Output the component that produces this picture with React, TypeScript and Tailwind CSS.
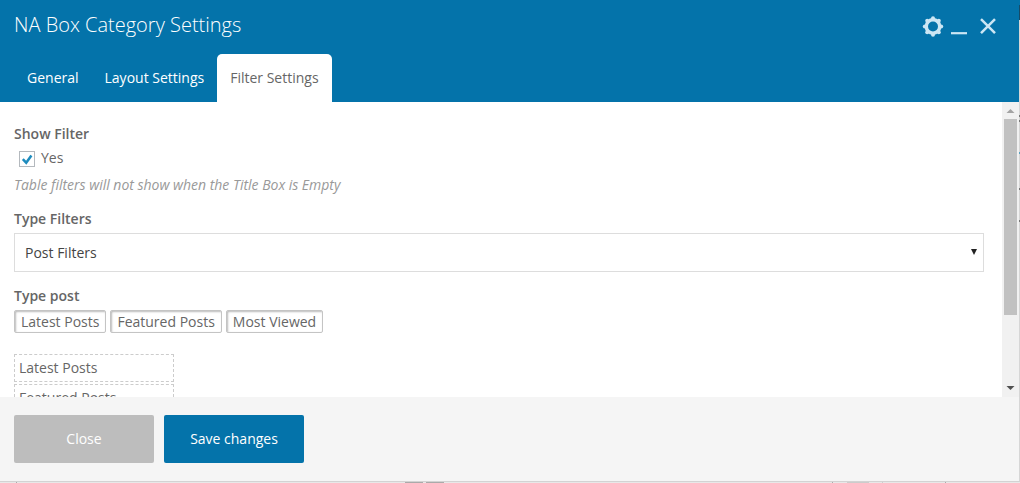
const tags = ["Latest Posts", "Featured Posts", "Most Viewed"];
const sortable = tags.slice(0, 2);

function Header() {
  return (
    <header className="flex h-[102px] shrink-0 flex-col justify-between bg-[#0473aa] text-white">
      <div className="flex items-start justify-between pr-[22px] pl-[14px]">
        <h1 className="pt-[10px] text-[20px] leading-[30px] font-light">NA Box Category Settings</h1>
        <div className="flex pt-4 text-[#cce6f4]">
          <svg width="22" height="22" viewBox="0 0 22 22" fill="none" stroke="currentColor">
            <circle cx="11" cy="10.5" r="6.7" strokeWidth="3.4" />
            <g fill="currentColor" stroke="none">
              <circle cx="11" cy="2.3" r="2" />
              <circle cx="16.8" cy="4.7" r="2" />
              <circle cx="19.2" cy="10.5" r="2" />
              <circle cx="16.8" cy="16.3" r="2" />
              <circle cx="11" cy="18.7" r="2" />
              <circle cx="5.2" cy="16.3" r="2" />
              <circle cx="2.8" cy="10.5" r="2" />
              <circle cx="5.2" cy="4.7" r="2" />
            </g>
          </svg>
          <svg className="ml-[7px]" width="16" height="22" viewBox="0 0 16 22" stroke="currentColor">
            <path d="M0 17.2h16" strokeWidth="2.2" />
          </svg>
          <svg className="ml-[12px]" width="18" height="22" viewBox="0 0 18 22" stroke="currentColor">
            <path d="M2 3.2l14 14M16 3.2l-14 14" strokeWidth="2.5" />
          </svg>
        </div>
      </div>
      <nav className="flex h-12 pl-[14px] leading-[48px]">
        <button className="px-[13px]">General</button>
        <button className="px-[13px]">Layout Settings</button>
        <button className="rounded-t-[5px] bg-white px-[13px] text-[#666]">Filter Settings</button>
      </nav>
    </header>
  );
}

function Scrollbar() {
  return (
    <div className="flex w-[17px] shrink-0 flex-col items-center bg-[#f1f1f1]">
      <svg className="shrink-0" width="17" height="17" viewBox="0 0 17 17">
        <path d="M4.5 11l4-4 4 4z" fill="#a3a3a3" />
      </svg>
      <div className="h-[196px] w-[13px] bg-[#c1c1c1]" />
      <svg className="mt-auto" width="17" height="17" viewBox="0 0 17 17">
        <path d="M4.5 6l4 4 4-4z" fill="#505050" />
      </svg>
    </div>
  );
}

export default function App() {
  return (
    <div className="flex h-[483px] w-[1020px] flex-col overflow-hidden bg-[#e8e8e8] font-['Open_Sans',sans-serif] text-[14px] text-[#666]">
      <div className="flex h-[481px] shrink-0">
        <div className="flex w-[1019px] shrink-0 flex-col">
          <Header />
          <div className="flex h-[295px] shrink-0 overflow-hidden bg-white">
            <main className="flex flex-1 flex-col items-start pr-[18px] pl-[14px]">
              <h2 className="mt-[22px] leading-5 font-semibold">Show Filter</h2>
              <label className="mt-1 flex h-5 items-center pl-[5px] leading-5">
                <span className="mt-[2px] mr-[6px] flex size-4 items-center justify-center border border-[#b4b9be] bg-white">
                  <svg width="14" height="14" viewBox="0 0 14 14" fill="none">
                    <path d="M2.8 7.2l3.4 3.5 5.2-7.2" stroke="#1e8cbe" strokeWidth="2.5" />
                  </svg>
                </span>
                Yes
              </label>
              <p className="mt-[7px] leading-5 tracking-[-0.015px] text-[#999] italic">
                Table filters will not show when the Title Box is Empty
              </p>
              <h2 className="mt-[14px] leading-5 font-semibold">Type Filters</h2>
              <div className="mt-[4px] flex h-[39px] w-full shrink-0 items-center justify-between border border-[#ddd] pr-[6px] pl-[10px] text-[#444]">
                <span>Post Filters</span>
                <svg width="6" height="7" viewBox="0 0 6 7">
                  <path d="M0 0h6L3 6z" fill="#222" />
                </svg>
              </div>
              <h2 className="mt-[14px] leading-5 font-semibold">Type post</h2>
              <div className="mt-[4px] flex gap-1">
                {tags.map((tag) => (
                  <span key={tag} className="h-[23px] rounded-[2px] border border-[#c4c4c4] px-[6px] leading-[21px] shadow-[inset_1px_1px_2px_#bbb]">
                    {tag}
                  </span>
                ))}
              </div>
              <ul className="mt-[21px] flex w-40 flex-col gap-[2px]">
                {sortable.map((tag) => (
                  <li key={tag} className="h-7 border border-dashed border-[#ccc] px-1 leading-[26px]">
                    {tag}
                  </li>
                ))}
              </ul>
            </main>
            <Scrollbar />
          </div>
          <footer className="flex flex-1 gap-[10px] bg-[#f5f5f5] pt-[18px] pl-[14px] text-white">
            <button className="h-12 w-[140px] rounded-[2px] bg-[#bdbdbd] pb-[2px]">Close</button>
            <button className="h-12 w-[140px] rounded-[2px] bg-[#0473aa] pb-[2px]">Save changes</button>
          </footer>
        </div>
        <div className="flex w-px flex-col bg-[#d6d6d6]">
          <div className="h-[5px] bg-[#0473aa]" />
          <div className="h-[15px] bg-[#164b68]" />
          <div className="mt-[95px] h-[2px] bg-[#777]" />
          <div className="mt-[3px] h-[2px] bg-[#777]" />
          <div className="mt-[30px] h-[2px] bg-[#58a0c0]" />
          <div className="mt-[34px] h-[2px] bg-[#777]" />
          <div className="mt-[30px] h-[2px] bg-[#777]" />
        </div>
      </div>
      <div className="flex h-[2px] shrink-0 border-t border-[#d3d3d3]">
        <div className="ml-4 h-px w-px bg-[#aaa]" />
        <div className="ml-[388px] h-px w-[18px] bg-[#aaa]" />
        <div className="ml-[3px] h-px w-[18px] bg-[#aaa]" />
        <div className="ml-[388px] h-px w-px bg-[#aaa]" />
        <div className="ml-[14px] h-px w-[22px] bg-[#ccc]" />
        <div className="ml-[13px] h-px w-px bg-[#ccc]" />
        <div className="ml-[62px] h-px w-px bg-[#aaa]" />
      </div>
    </div>
  );
}
